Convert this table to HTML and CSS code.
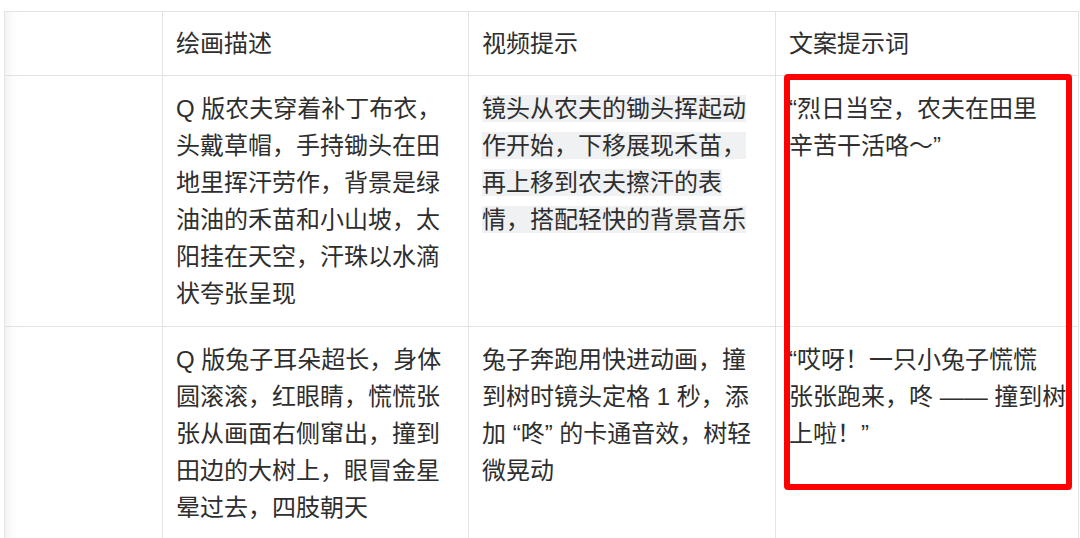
FILE: index.html
```html
<!DOCTYPE html>
<html lang="zh-CN">
<head>
    <meta charset="UTF-8">
    <meta name="viewport" content="width=device-width, initial-scale=1.0">
    <title>分镜提示词表</title>
    <link rel="stylesheet" href="styles.css">
</head>
<body>

    <!-- Prompt table -->
    <div class="table-wrap">
        <table class="prompt-table">
            <colgroup>
                <col class="col-index">
                <col class="col-draw">
                <col class="col-video">
                <col class="col-copy">
            </colgroup>
            <thead>
                <tr>
                    <th class="cell-index"></th>
                    <th>绘画描述</th>
                    <th>视频提示</th>
                    <th>文案提示词</th>
                </tr>
            </thead>
            <tbody>
                <tr>
                    <td class="cell-index"></td>
                    <td>Q 版农夫穿着补丁布衣，头戴草帽，手持锄头在田地里挥汗劳作，背景是绿油油的禾苗和小山坡，太阳挂在天空，汗珠以水滴状夸张呈现</td>
                    <td><span class="mark">镜头从农夫的锄头挥起动作开始，下移展现禾苗，再上移到农夫擦汗的表情，搭配轻快的背景音乐</span></td>
                    <td>“烈日当空，农夫在田里<br>辛苦干活咯～”</td>
                </tr>
                <tr>
                    <td class="cell-index"></td>
                    <td>Q 版兔子耳朵超长，身体圆滚滚，红眼睛，慌慌张张从画面右侧窜出，撞到田边的大树上，眼冒金星晕过去，四肢朝天</td>
                    <td>兔子奔跑用快进动画，撞到树时镜头定格 1 秒，添加 “咚” 的卡通音效，树轻微晃动</td>
                    <td>“哎呀！一只小兔子慌慌<br>张张跑来，咚 —— 撞到树<br>上啦！”</td>
                </tr>
            </tbody>
        </table>

        <!-- annotation frame -->
        <div class="highlight-box"></div>
    </div>

</body>
</html>
```

FILE: styles.css
```css
* {
    margin: 0;
    padding: 0;
    box-sizing: border-box;
}
body {
    background: #fff;
    font-family: "Liberation Sans", "Noto Sans CJK SC", sans-serif;
    color: #2e2e2e;
    overflow: hidden;
}

/* Table */
.table-wrap {
    position: relative;
    width: 1074px;
    margin: 11px 0 0 4px;
}
.prompt-table {
    width: 100%;
    table-layout: fixed;
    border-collapse: collapse;
    font-size: 24px;
    line-height: 37px;
}
.col-index { width: 158px; }
.col-draw { width: 306px; }
.col-video { width: 307px; }
.col-copy { width: 303px; }

.prompt-table th,
.prompt-table td {
    border: 1px solid #e2e3e6;
    padding: 14px 14px 14px 13px;
    text-align: left;
    vertical-align: top;
    font-weight: normal;
}
.prompt-table th {
    padding: 13px 14px 13px 13px;
}
.prompt-table td:last-child {
    padding-right: 4px;
}
.cell-index {
    box-shadow: inset 12px 0 10px -8px rgba(0, 0, 0, 0.06);
}

/* grey marker behind text lines */
.mark {
    background: linear-gradient(#f0f1f3, #f0f1f3) center / 100% 29px no-repeat;
    -webkit-box-decoration-break: clone;
    box-decoration-break: clone;
}

/* Red annotation frame */
.highlight-box {
    position: absolute;
    left: 780px;
    top: 63px;
    width: 288px;
    height: 416px;
    border: 6px solid #ff0000;
    border-radius: 4px;
    pointer-events: none;
}
```
